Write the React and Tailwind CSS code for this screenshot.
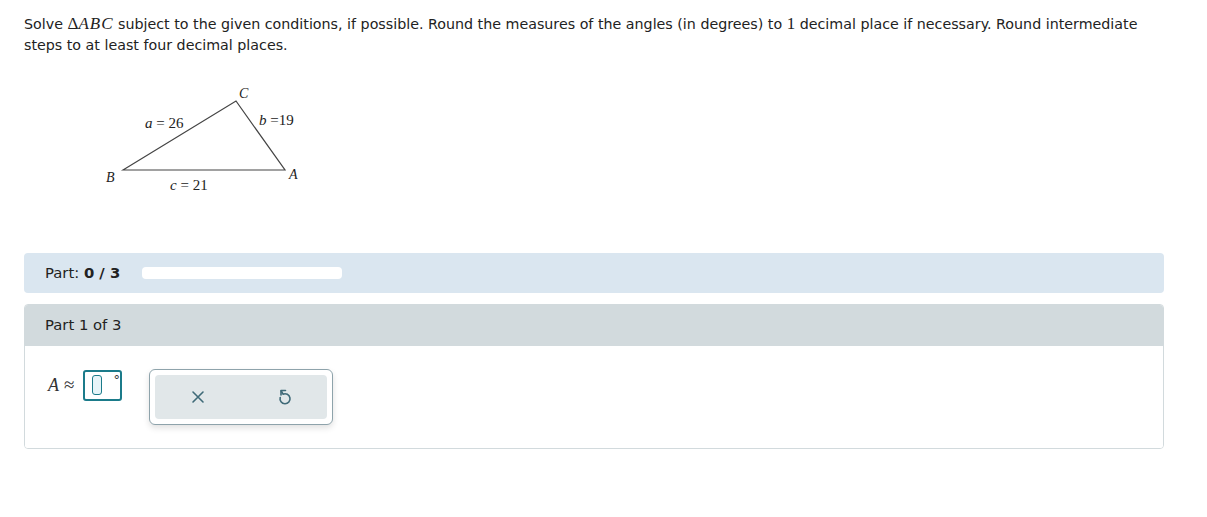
import React from 'react';

const SANS = "font-['DejaVu_Sans','Verdana',sans-serif]";

function Triangle() {
  return (
    <svg width="230" height="120" viewBox="0 0 230 120" className="block">
      <polygon points="33,92 146,23 195,92" fill="none" stroke="#444" strokeWidth="1.2" />
      <g fontFamily="'Liberation Serif', serif" fontStyle="italic" fontSize="14" fill="#222">
        <text x="149" y="20">C</text>
        <text x="16" y="104">B</text>
        <text x="199" y="101">A</text>
      </g>
      <g fontFamily="'Liberation Serif', serif" fontSize="15" fill="#222">
        <text x="55" y="50"><tspan fontStyle="italic">a</tspan> = 26</text>
        <text x="169" y="47"><tspan fontStyle="italic">b</tspan> =19</text>
        <text x="80" y="112"><tspan fontStyle="italic">c</tspan> = 21</text>
      </g>
    </svg>
  );
}

function UndoIcon() {
  return (
    <svg width="18" height="18" viewBox="0 0 18 18" fill="none" stroke="#3f6a78" strokeWidth="1.6" strokeLinecap="round" strokeLinejoin="round">
      <path d="M6 2.5 L6 7 M6 2.5 L10.5 2.5" />
      <path d="M6.3 3 L8 6.2 A5 5 0 1 1 5.2 9.5" />
    </svg>
  );
}

export default function App() {
  return (
    <div className={`${SANS} w-[1207px] h-[517px] bg-white text-[#1a1a1a] px-6`}>
      <p className="pt-[13px] text-[14.25px] leading-[21px] text-[#222] pr-[40px]">
        Solve <span className="font-['Liberation_Serif',serif] text-[17px]">Δ<i className="tracking-[1px]">ABC</i></span> subject to the given conditions, if possible. Round the measures of the angles (in degrees) to <span className="font-['Liberation_Serif',serif] text-[17px]">1</span> decimal place if necessary. Round intermediate steps to at least four decimal places.
      </p>

      <div className="pl-[66px] pt-[22px]">
        <Triangle />
      </div>

      <div className="mt-[55px] w-[1140px] h-[40px] rounded bg-[#dae6f0] flex items-center pl-[21px] text-[14.8px] text-[#222]">
        <span>Part: <b>0 / 3</b></span>
        <div className="ml-[22px] w-[200px] h-[12px] rounded-sm bg-white" />
      </div>

      <div className="mt-[11px] w-[1140px] rounded border border-[#d2dadd] overflow-hidden">
        <div className="h-[41px] bg-[#d2dadd] flex items-center pl-[20px] text-[14.8px] text-[#222]">
          Part 1 of 3
        </div>
        <div className="h-[102px] bg-white flex items-start pt-[24px] pl-[23px]">
          <div className="flex items-center h-[31px] shrink-0">
            <span className="font-['Liberation_Serif',serif] italic text-[18px] text-[#333]">A</span>
            <span className="ml-[5px] font-['Liberation_Serif',serif] text-[19px] text-[#333]">≈</span>
            <div className="ml-[9px] shrink-0 w-[39px] h-[31px] border-2 border-[#1b7b8a] rounded-[3px] flex items-start pt-[3px] pl-[7px]">
              <div className="shrink-0 w-[10px] h-[20px] rounded-[3px] border border-[#1b7b8a] bg-[#e6f4f8]" />
              <span className="ml-[11px] -mt-[5px] text-[13px] text-[#333]">°</span>
            </div>
          </div>
          <div className="ml-[27px] -mt-[1px] shrink-0 w-[184px] h-[56px] rounded-[6px] border border-[#8ea3ab] bg-white p-[5px] shadow-[0_3px_6px_rgba(0,0,0,0.12)]">
            <div className="w-full h-full rounded bg-[#e1e7e9] flex items-center">
              <div className="w-[86px] flex justify-center">
                <svg width="14" height="14" viewBox="0 0 14 14" stroke="#3f6a78" strokeWidth="1.6" strokeLinecap="round">
                  <path d="M2 2 L12 12 M12 2 L2 12" />
                </svg>
              </div>
              <div className="w-[86px] flex justify-center">
                <UndoIcon />
              </div>
            </div>
          </div>
        </div>
      </div>
    </div>
  );
}
